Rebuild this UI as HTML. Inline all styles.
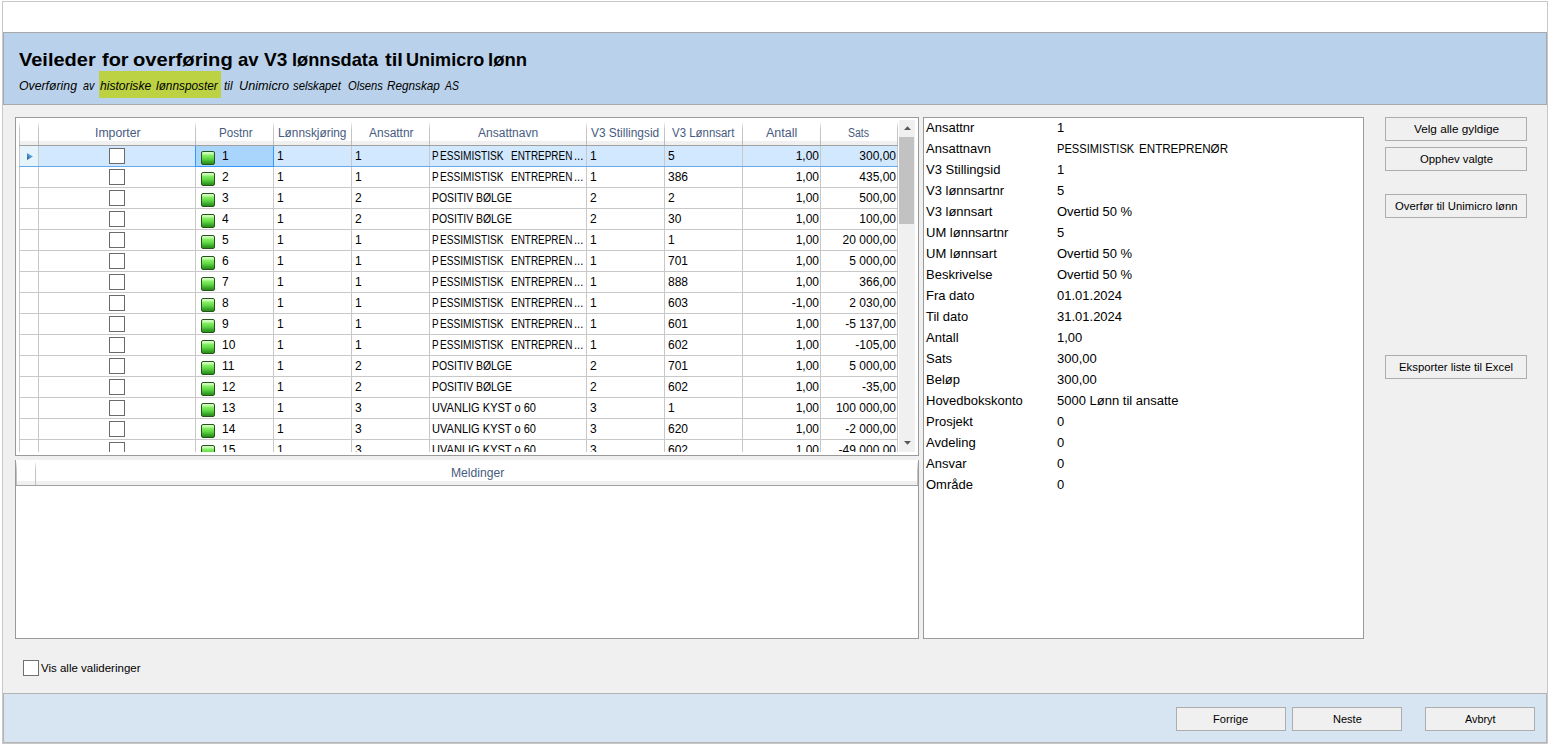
<!DOCTYPE html>
<html><head><meta charset="utf-8"><title>Veileder</title>
<style>
html,body{margin:0;padding:0;width:1548px;height:744px;overflow:hidden;background:#fff;}
body{position:relative;font-family:'Liberation Sans',sans-serif;}
.r{position:absolute;box-sizing:content-box;}
.t{position:absolute;white-space:pre;color:#000;font-family:'Liberation Sans',sans-serif;}
.g{position:absolute;width:12px;height:12px;border:1px solid #24561c;border-radius:2px;background:linear-gradient(#d4ffc4 0%,#c8fcb0 14%,#86f066 26%,#62d846 55%,#3aa82a 82%,#2a8a18 100%);}
.btn{position:absolute;border:1px solid #adadad;background:#f0f0f0;text-align:center;color:#000;white-space:pre;font-family:'Liberation Sans',sans-serif;}
</style></head><body>
<div class="r" style="left:0px;top:0px;width:1548px;height:744px;background:#ffffff;"></div>
<div class="r" style="left:2px;top:1px;width:1544px;height:741px;border:1px solid #c8c8c8;background:#f0f0f0;"></div>
<div class="r" style="left:3px;top:2px;width:1544px;height:30px;background:#ffffff;"></div>
<div class="r" style="left:3px;top:32px;width:1542px;height:71px;border:1px solid #a9a9a9;background:#b9d1ea;"></div>
<div class="t" style="left:19.20px;top:50px;font-size:19px;line-height:19px;font-weight:bold;transform:scaleX(1.0519);transform-origin:0 0;">Veileder</div>
<div class="t" style="left:102.00px;top:50px;font-size:19px;line-height:19px;font-weight:bold;transform:scaleX(1.0489);transform-origin:0 0;">for</div>
<div class="t" style="left:133.40px;top:50px;font-size:19px;line-height:19px;font-weight:bold;transform:scaleX(1.0616);transform-origin:0 0;">overføring</div>
<div class="t" style="left:237.50px;top:50px;font-size:19px;line-height:19px;font-weight:bold;transform:scaleX(0.9737);transform-origin:0 0;">av</div>
<div class="t" style="left:263.50px;top:50px;font-size:19px;line-height:19px;font-weight:bold;transform:scaleX(1.0012);transform-origin:0 0;">V3</div>
<div class="t" style="left:292.14px;top:50px;font-size:19px;line-height:19px;font-weight:bold;transform:scaleX(0.9589);transform-origin:0 0;">lønnsdata</div>
<div class="t" style="left:384.70px;top:50px;font-size:19px;line-height:19px;font-weight:bold;transform:scaleX(1.0637);transform-origin:0 0;">til</div>
<div class="t" style="left:406.45px;top:50px;font-size:19px;line-height:19px;font-weight:bold;transform:scaleX(0.9500);transform-origin:0 0;">Unimicro</div>
<div class="t" style="left:488.43px;top:50px;font-size:19px;line-height:19px;font-weight:bold;transform:scaleX(0.9743);transform-origin:0 0;">lønn</div>
<div class="r" style="left:99px;top:71px;width:122px;height:27px;background:#bdd243;"></div>
<div class="t" style="left:18.70px;top:79px;font-size:13px;line-height:13px;font-style:italic;transform:scaleX(0.9442);transform-origin:0 0;">Overføring</div>
<div class="t" style="left:83.40px;top:79px;font-size:13px;line-height:13px;font-style:italic;transform:scaleX(0.8273);transform-origin:0 0;">av</div>
<div class="t" style="left:100.00px;top:79px;font-size:13px;line-height:13px;font-style:italic;transform:scaleX(0.9327);transform-origin:0 0;">historiske</div>
<div class="t" style="left:156.20px;top:79px;font-size:13px;line-height:13px;font-style:italic;transform:scaleX(0.9097);transform-origin:0 0;">lønnsposter</div>
<div class="t" style="left:223.80px;top:79px;font-size:13px;line-height:13px;font-style:italic;transform:scaleX(0.9143);transform-origin:0 0;">til</div>
<div class="t" style="left:238.70px;top:79px;font-size:13px;line-height:13px;font-style:italic;transform:scaleX(0.9755);transform-origin:0 0;">Unimicro</div>
<div class="t" style="left:293.00px;top:79px;font-size:13px;line-height:13px;font-style:italic;transform:scaleX(0.8702);transform-origin:0 0;">selskapet</div>
<div class="t" style="left:347.50px;top:79px;font-size:13px;line-height:13px;font-style:italic;transform:scaleX(0.8618);transform-origin:0 0;">Olsens</div>
<div class="t" style="left:387.30px;top:79px;font-size:13px;line-height:13px;font-style:italic;transform:scaleX(0.9038);transform-origin:0 0;">Regnskap</div>
<div class="t" style="left:445.30px;top:79px;font-size:13px;line-height:13px;font-style:italic;transform:scaleX(0.7980);transform-origin:0 0;">AS</div>
<div class="r" style="left:3px;top:693px;width:1542px;height:48px;border:1px solid #b4b4b4;background:#d7e4f2;"></div>
<div class="r" style="left:15px;top:117px;width:902px;height:337px;border:1px solid #9a9a9a;background:#ffffff;"></div>
<div class="r" style="left:20px;top:141px;width:878px;height:4px;background:#f0f0f0;"></div>
<div class="r" style="left:19px;top:145px;width:879px;height:1px;background:#a0a0a0;"></div>
<div class="r" style="left:19px;top:122px;width:1px;height:23px;background:linear-gradient(#f4f4f4,#c8c8c8 30%,#bdbdbd)"></div>
<div class="r" style="left:38px;top:122px;width:1px;height:23px;background:linear-gradient(#f4f4f4,#c8c8c8 30%,#bdbdbd)"></div>
<div class="r" style="left:195px;top:122px;width:1px;height:23px;background:linear-gradient(#f4f4f4,#c8c8c8 30%,#bdbdbd)"></div>
<div class="r" style="left:273px;top:122px;width:1px;height:23px;background:linear-gradient(#f4f4f4,#c8c8c8 30%,#bdbdbd)"></div>
<div class="r" style="left:351px;top:122px;width:1px;height:23px;background:linear-gradient(#f4f4f4,#c8c8c8 30%,#bdbdbd)"></div>
<div class="r" style="left:429px;top:122px;width:1px;height:23px;background:linear-gradient(#f4f4f4,#c8c8c8 30%,#bdbdbd)"></div>
<div class="r" style="left:586px;top:122px;width:1px;height:23px;background:linear-gradient(#f4f4f4,#c8c8c8 30%,#bdbdbd)"></div>
<div class="r" style="left:664px;top:122px;width:1px;height:23px;background:linear-gradient(#f4f4f4,#c8c8c8 30%,#bdbdbd)"></div>
<div class="r" style="left:742px;top:122px;width:1px;height:23px;background:linear-gradient(#f4f4f4,#c8c8c8 30%,#bdbdbd)"></div>
<div class="r" style="left:820px;top:122px;width:1px;height:23px;background:linear-gradient(#f4f4f4,#c8c8c8 30%,#bdbdbd)"></div>
<div class="r" style="left:897px;top:122px;width:1px;height:23px;background:linear-gradient(#f4f4f4,#c8c8c8 30%,#bdbdbd)"></div>
<div class="t" style="left:94.78px;top:127px;font-size:12px;line-height:12px;color:#475b80;transform:scaleX(1.0210);transform-origin:0 0;">Importer</div>
<div class="t" style="left:218.70px;top:127px;font-size:12px;line-height:12px;color:#475b80;transform:scaleX(0.9658);transform-origin:0 0;">Postnr</div>
<div class="t" style="left:278.40px;top:127px;font-size:12px;line-height:12px;color:#475b80;transform:scaleX(0.9871);transform-origin:0 0;">Lønnskjøring</div>
<div class="t" style="left:368.50px;top:127px;font-size:12px;line-height:12px;color:#475b80;transform:scaleX(0.9979);transform-origin:0 0;">Ansattnr</div>
<div class="t" style="left:478.00px;top:127px;font-size:12px;line-height:12px;color:#475b80;transform:scaleX(1.0022);transform-origin:0 0;">Ansattnavn</div>
<div class="t" style="left:591.10px;top:127px;font-size:12px;line-height:12px;color:#475b80;transform:scaleX(0.9922);transform-origin:0 0;">V3 Stillingsid</div>
<div class="t" style="left:672.40px;top:127px;font-size:12px;line-height:12px;color:#475b80;transform:scaleX(0.9541);transform-origin:0 0;">V3 Lønnsart</div>
<div class="t" style="left:766.20px;top:127px;font-size:12px;line-height:12px;color:#475b80;transform:scaleX(1.0425);transform-origin:0 0;">Antall</div>
<div class="t" style="left:848.30px;top:127px;font-size:12px;line-height:12px;color:#475b80;transform:scaleX(0.8746);transform-origin:0 0;">Sats</div>
<div class="r" style="left:0;top:146px;width:898px;height:306px;overflow:hidden">
<div class="r" style="left:20px;top:0px;width:18px;height:20px;background:#e5f3fb;"></div>
<div class="r" style="left:39px;top:0px;width:858px;height:20px;background:#d1e8ff;"></div>
<div class="r" style="left:196px;top:0px;width:77px;height:20px;background:#a9d4fb;"></div>
<div class="r" style="left:19px;top:20px;width:879px;height:1px;background:#64aaf0;"></div>
<div class="r" style="left:109px;top:2px;width:14px;height:14px;border:1px solid #6a6a6a;background:#fff"></div>
<div class="g" style="left:201px;top:5px"></div>
<div class="t" style="left:222px;top:4px;font-size:12px;line-height:12px;">1</div>
<div class="t" style="left:277px;top:4px;font-size:12px;line-height:12px;">1</div>
<div class="t" style="left:355px;top:4px;font-size:12px;line-height:12px;">1</div>
<div class="t" style="left:432.00px;top:4px;font-size:12px;line-height:12px;transform:scaleX(0.8250);transform-origin:0 0;">P</div>
<div class="t" style="left:440.10px;top:4px;font-size:12px;line-height:12px;transform:scaleX(0.8428);transform-origin:0 0;">ESSIMISTISK</div>
<div class="t" style="left:511.00px;top:4px;font-size:12px;line-height:12px;transform:scaleX(0.8290);transform-origin:0 0;">ENTREPREN</div>
<div class="t" style="left:574.08px;top:4px;font-size:12px;line-height:12px;transform:scaleX(0.9229);transform-origin:0 0;">...</div>
<div class="t" style="left:590px;top:4px;font-size:12px;line-height:12px;">1</div>
<div class="t" style="left:668px;top:4px;font-size:12px;line-height:12px;">5</div>
<div class="t" style="right:79px;top:4px;font-size:12px;line-height:12px">1,00</div>
<div class="t" style="right:2px;top:4px;font-size:12px;line-height:12px">300,00</div>
<div class="r" style="left:19px;top:41px;width:879px;height:1px;background:#c8c8c8;"></div>
<div class="r" style="left:109px;top:23px;width:14px;height:14px;border:1px solid #6a6a6a;background:#fff"></div>
<div class="g" style="left:201px;top:26px"></div>
<div class="t" style="left:222px;top:25px;font-size:12px;line-height:12px;">2</div>
<div class="t" style="left:277px;top:25px;font-size:12px;line-height:12px;">1</div>
<div class="t" style="left:355px;top:25px;font-size:12px;line-height:12px;">1</div>
<div class="t" style="left:432.00px;top:25px;font-size:12px;line-height:12px;transform:scaleX(0.8250);transform-origin:0 0;">P</div>
<div class="t" style="left:440.10px;top:25px;font-size:12px;line-height:12px;transform:scaleX(0.8428);transform-origin:0 0;">ESSIMISTISK</div>
<div class="t" style="left:511.00px;top:25px;font-size:12px;line-height:12px;transform:scaleX(0.8290);transform-origin:0 0;">ENTREPREN</div>
<div class="t" style="left:574.08px;top:25px;font-size:12px;line-height:12px;transform:scaleX(0.9229);transform-origin:0 0;">...</div>
<div class="t" style="left:590px;top:25px;font-size:12px;line-height:12px;">1</div>
<div class="t" style="left:668px;top:25px;font-size:12px;line-height:12px;">386</div>
<div class="t" style="right:79px;top:25px;font-size:12px;line-height:12px">1,00</div>
<div class="t" style="right:2px;top:25px;font-size:12px;line-height:12px">435,00</div>
<div class="r" style="left:19px;top:62px;width:879px;height:1px;background:#c8c8c8;"></div>
<div class="r" style="left:109px;top:44px;width:14px;height:14px;border:1px solid #6a6a6a;background:#fff"></div>
<div class="g" style="left:201px;top:47px"></div>
<div class="t" style="left:222px;top:46px;font-size:12px;line-height:12px;">3</div>
<div class="t" style="left:277px;top:46px;font-size:12px;line-height:12px;">1</div>
<div class="t" style="left:355px;top:46px;font-size:12px;line-height:12px;">2</div>
<div class="t" style="left:431.70px;top:46px;font-size:12px;line-height:12px;transform:scaleX(0.8683);transform-origin:0 0;">POSITIV BØLGE</div>
<div class="t" style="left:590px;top:46px;font-size:12px;line-height:12px;">2</div>
<div class="t" style="left:668px;top:46px;font-size:12px;line-height:12px;">2</div>
<div class="t" style="right:79px;top:46px;font-size:12px;line-height:12px">1,00</div>
<div class="t" style="right:2px;top:46px;font-size:12px;line-height:12px">500,00</div>
<div class="r" style="left:19px;top:83px;width:879px;height:1px;background:#c8c8c8;"></div>
<div class="r" style="left:109px;top:65px;width:14px;height:14px;border:1px solid #6a6a6a;background:#fff"></div>
<div class="g" style="left:201px;top:68px"></div>
<div class="t" style="left:222px;top:67px;font-size:12px;line-height:12px;">4</div>
<div class="t" style="left:277px;top:67px;font-size:12px;line-height:12px;">1</div>
<div class="t" style="left:355px;top:67px;font-size:12px;line-height:12px;">2</div>
<div class="t" style="left:431.70px;top:67px;font-size:12px;line-height:12px;transform:scaleX(0.8683);transform-origin:0 0;">POSITIV BØLGE</div>
<div class="t" style="left:590px;top:67px;font-size:12px;line-height:12px;">2</div>
<div class="t" style="left:668px;top:67px;font-size:12px;line-height:12px;">30</div>
<div class="t" style="right:79px;top:67px;font-size:12px;line-height:12px">1,00</div>
<div class="t" style="right:2px;top:67px;font-size:12px;line-height:12px">100,00</div>
<div class="r" style="left:19px;top:104px;width:879px;height:1px;background:#c8c8c8;"></div>
<div class="r" style="left:109px;top:86px;width:14px;height:14px;border:1px solid #6a6a6a;background:#fff"></div>
<div class="g" style="left:201px;top:89px"></div>
<div class="t" style="left:222px;top:88px;font-size:12px;line-height:12px;">5</div>
<div class="t" style="left:277px;top:88px;font-size:12px;line-height:12px;">1</div>
<div class="t" style="left:355px;top:88px;font-size:12px;line-height:12px;">1</div>
<div class="t" style="left:432.00px;top:88px;font-size:12px;line-height:12px;transform:scaleX(0.8250);transform-origin:0 0;">P</div>
<div class="t" style="left:440.10px;top:88px;font-size:12px;line-height:12px;transform:scaleX(0.8428);transform-origin:0 0;">ESSIMISTISK</div>
<div class="t" style="left:511.00px;top:88px;font-size:12px;line-height:12px;transform:scaleX(0.8290);transform-origin:0 0;">ENTREPREN</div>
<div class="t" style="left:574.08px;top:88px;font-size:12px;line-height:12px;transform:scaleX(0.9229);transform-origin:0 0;">...</div>
<div class="t" style="left:590px;top:88px;font-size:12px;line-height:12px;">1</div>
<div class="t" style="left:668px;top:88px;font-size:12px;line-height:12px;">1</div>
<div class="t" style="right:79px;top:88px;font-size:12px;line-height:12px">1,00</div>
<div class="t" style="right:2px;top:88px;font-size:12px;line-height:12px">20 000,00</div>
<div class="r" style="left:19px;top:125px;width:879px;height:1px;background:#c8c8c8;"></div>
<div class="r" style="left:109px;top:107px;width:14px;height:14px;border:1px solid #6a6a6a;background:#fff"></div>
<div class="g" style="left:201px;top:110px"></div>
<div class="t" style="left:222px;top:109px;font-size:12px;line-height:12px;">6</div>
<div class="t" style="left:277px;top:109px;font-size:12px;line-height:12px;">1</div>
<div class="t" style="left:355px;top:109px;font-size:12px;line-height:12px;">1</div>
<div class="t" style="left:432.00px;top:109px;font-size:12px;line-height:12px;transform:scaleX(0.8250);transform-origin:0 0;">P</div>
<div class="t" style="left:440.10px;top:109px;font-size:12px;line-height:12px;transform:scaleX(0.8428);transform-origin:0 0;">ESSIMISTISK</div>
<div class="t" style="left:511.00px;top:109px;font-size:12px;line-height:12px;transform:scaleX(0.8290);transform-origin:0 0;">ENTREPREN</div>
<div class="t" style="left:574.08px;top:109px;font-size:12px;line-height:12px;transform:scaleX(0.9229);transform-origin:0 0;">...</div>
<div class="t" style="left:590px;top:109px;font-size:12px;line-height:12px;">1</div>
<div class="t" style="left:668px;top:109px;font-size:12px;line-height:12px;">701</div>
<div class="t" style="right:79px;top:109px;font-size:12px;line-height:12px">1,00</div>
<div class="t" style="right:2px;top:109px;font-size:12px;line-height:12px">5 000,00</div>
<div class="r" style="left:19px;top:146px;width:879px;height:1px;background:#c8c8c8;"></div>
<div class="r" style="left:109px;top:128px;width:14px;height:14px;border:1px solid #6a6a6a;background:#fff"></div>
<div class="g" style="left:201px;top:131px"></div>
<div class="t" style="left:222px;top:130px;font-size:12px;line-height:12px;">7</div>
<div class="t" style="left:277px;top:130px;font-size:12px;line-height:12px;">1</div>
<div class="t" style="left:355px;top:130px;font-size:12px;line-height:12px;">1</div>
<div class="t" style="left:432.00px;top:130px;font-size:12px;line-height:12px;transform:scaleX(0.8250);transform-origin:0 0;">P</div>
<div class="t" style="left:440.10px;top:130px;font-size:12px;line-height:12px;transform:scaleX(0.8428);transform-origin:0 0;">ESSIMISTISK</div>
<div class="t" style="left:511.00px;top:130px;font-size:12px;line-height:12px;transform:scaleX(0.8290);transform-origin:0 0;">ENTREPREN</div>
<div class="t" style="left:574.08px;top:130px;font-size:12px;line-height:12px;transform:scaleX(0.9229);transform-origin:0 0;">...</div>
<div class="t" style="left:590px;top:130px;font-size:12px;line-height:12px;">1</div>
<div class="t" style="left:668px;top:130px;font-size:12px;line-height:12px;">888</div>
<div class="t" style="right:79px;top:130px;font-size:12px;line-height:12px">1,00</div>
<div class="t" style="right:2px;top:130px;font-size:12px;line-height:12px">366,00</div>
<div class="r" style="left:19px;top:167px;width:879px;height:1px;background:#c8c8c8;"></div>
<div class="r" style="left:109px;top:149px;width:14px;height:14px;border:1px solid #6a6a6a;background:#fff"></div>
<div class="g" style="left:201px;top:152px"></div>
<div class="t" style="left:222px;top:151px;font-size:12px;line-height:12px;">8</div>
<div class="t" style="left:277px;top:151px;font-size:12px;line-height:12px;">1</div>
<div class="t" style="left:355px;top:151px;font-size:12px;line-height:12px;">1</div>
<div class="t" style="left:432.00px;top:151px;font-size:12px;line-height:12px;transform:scaleX(0.8250);transform-origin:0 0;">P</div>
<div class="t" style="left:440.10px;top:151px;font-size:12px;line-height:12px;transform:scaleX(0.8428);transform-origin:0 0;">ESSIMISTISK</div>
<div class="t" style="left:511.00px;top:151px;font-size:12px;line-height:12px;transform:scaleX(0.8290);transform-origin:0 0;">ENTREPREN</div>
<div class="t" style="left:574.08px;top:151px;font-size:12px;line-height:12px;transform:scaleX(0.9229);transform-origin:0 0;">...</div>
<div class="t" style="left:590px;top:151px;font-size:12px;line-height:12px;">1</div>
<div class="t" style="left:668px;top:151px;font-size:12px;line-height:12px;">603</div>
<div class="t" style="right:79px;top:151px;font-size:12px;line-height:12px">-1,00</div>
<div class="t" style="right:2px;top:151px;font-size:12px;line-height:12px">2 030,00</div>
<div class="r" style="left:19px;top:188px;width:879px;height:1px;background:#c8c8c8;"></div>
<div class="r" style="left:109px;top:170px;width:14px;height:14px;border:1px solid #6a6a6a;background:#fff"></div>
<div class="g" style="left:201px;top:173px"></div>
<div class="t" style="left:222px;top:172px;font-size:12px;line-height:12px;">9</div>
<div class="t" style="left:277px;top:172px;font-size:12px;line-height:12px;">1</div>
<div class="t" style="left:355px;top:172px;font-size:12px;line-height:12px;">1</div>
<div class="t" style="left:432.00px;top:172px;font-size:12px;line-height:12px;transform:scaleX(0.8250);transform-origin:0 0;">P</div>
<div class="t" style="left:440.10px;top:172px;font-size:12px;line-height:12px;transform:scaleX(0.8428);transform-origin:0 0;">ESSIMISTISK</div>
<div class="t" style="left:511.00px;top:172px;font-size:12px;line-height:12px;transform:scaleX(0.8290);transform-origin:0 0;">ENTREPREN</div>
<div class="t" style="left:574.08px;top:172px;font-size:12px;line-height:12px;transform:scaleX(0.9229);transform-origin:0 0;">...</div>
<div class="t" style="left:590px;top:172px;font-size:12px;line-height:12px;">1</div>
<div class="t" style="left:668px;top:172px;font-size:12px;line-height:12px;">601</div>
<div class="t" style="right:79px;top:172px;font-size:12px;line-height:12px">1,00</div>
<div class="t" style="right:2px;top:172px;font-size:12px;line-height:12px">-5 137,00</div>
<div class="r" style="left:19px;top:209px;width:879px;height:1px;background:#c8c8c8;"></div>
<div class="r" style="left:109px;top:191px;width:14px;height:14px;border:1px solid #6a6a6a;background:#fff"></div>
<div class="g" style="left:201px;top:194px"></div>
<div class="t" style="left:222px;top:193px;font-size:12px;line-height:12px;">10</div>
<div class="t" style="left:277px;top:193px;font-size:12px;line-height:12px;">1</div>
<div class="t" style="left:355px;top:193px;font-size:12px;line-height:12px;">1</div>
<div class="t" style="left:432.00px;top:193px;font-size:12px;line-height:12px;transform:scaleX(0.8250);transform-origin:0 0;">P</div>
<div class="t" style="left:440.10px;top:193px;font-size:12px;line-height:12px;transform:scaleX(0.8428);transform-origin:0 0;">ESSIMISTISK</div>
<div class="t" style="left:511.00px;top:193px;font-size:12px;line-height:12px;transform:scaleX(0.8290);transform-origin:0 0;">ENTREPREN</div>
<div class="t" style="left:574.08px;top:193px;font-size:12px;line-height:12px;transform:scaleX(0.9229);transform-origin:0 0;">...</div>
<div class="t" style="left:590px;top:193px;font-size:12px;line-height:12px;">1</div>
<div class="t" style="left:668px;top:193px;font-size:12px;line-height:12px;">602</div>
<div class="t" style="right:79px;top:193px;font-size:12px;line-height:12px">1,00</div>
<div class="t" style="right:2px;top:193px;font-size:12px;line-height:12px">-105,00</div>
<div class="r" style="left:19px;top:230px;width:879px;height:1px;background:#c8c8c8;"></div>
<div class="r" style="left:109px;top:212px;width:14px;height:14px;border:1px solid #6a6a6a;background:#fff"></div>
<div class="g" style="left:201px;top:215px"></div>
<div class="t" style="left:222px;top:214px;font-size:12px;line-height:12px;">11</div>
<div class="t" style="left:277px;top:214px;font-size:12px;line-height:12px;">1</div>
<div class="t" style="left:355px;top:214px;font-size:12px;line-height:12px;">2</div>
<div class="t" style="left:431.70px;top:214px;font-size:12px;line-height:12px;transform:scaleX(0.8683);transform-origin:0 0;">POSITIV BØLGE</div>
<div class="t" style="left:590px;top:214px;font-size:12px;line-height:12px;">2</div>
<div class="t" style="left:668px;top:214px;font-size:12px;line-height:12px;">701</div>
<div class="t" style="right:79px;top:214px;font-size:12px;line-height:12px">1,00</div>
<div class="t" style="right:2px;top:214px;font-size:12px;line-height:12px">5 000,00</div>
<div class="r" style="left:19px;top:251px;width:879px;height:1px;background:#c8c8c8;"></div>
<div class="r" style="left:109px;top:233px;width:14px;height:14px;border:1px solid #6a6a6a;background:#fff"></div>
<div class="g" style="left:201px;top:236px"></div>
<div class="t" style="left:222px;top:235px;font-size:12px;line-height:12px;">12</div>
<div class="t" style="left:277px;top:235px;font-size:12px;line-height:12px;">1</div>
<div class="t" style="left:355px;top:235px;font-size:12px;line-height:12px;">2</div>
<div class="t" style="left:431.70px;top:235px;font-size:12px;line-height:12px;transform:scaleX(0.8683);transform-origin:0 0;">POSITIV BØLGE</div>
<div class="t" style="left:590px;top:235px;font-size:12px;line-height:12px;">2</div>
<div class="t" style="left:668px;top:235px;font-size:12px;line-height:12px;">602</div>
<div class="t" style="right:79px;top:235px;font-size:12px;line-height:12px">1,00</div>
<div class="t" style="right:2px;top:235px;font-size:12px;line-height:12px">-35,00</div>
<div class="r" style="left:19px;top:272px;width:879px;height:1px;background:#c8c8c8;"></div>
<div class="r" style="left:109px;top:254px;width:14px;height:14px;border:1px solid #6a6a6a;background:#fff"></div>
<div class="g" style="left:201px;top:257px"></div>
<div class="t" style="left:222px;top:256px;font-size:12px;line-height:12px;">13</div>
<div class="t" style="left:277px;top:256px;font-size:12px;line-height:12px;">1</div>
<div class="t" style="left:355px;top:256px;font-size:12px;line-height:12px;">3</div>
<div class="t" style="left:431.70px;top:256px;font-size:12px;line-height:12px;transform:scaleX(0.9208);transform-origin:0 0;">UVANLIG KYST o 60</div>
<div class="t" style="left:590px;top:256px;font-size:12px;line-height:12px;">3</div>
<div class="t" style="left:668px;top:256px;font-size:12px;line-height:12px;">1</div>
<div class="t" style="right:79px;top:256px;font-size:12px;line-height:12px">1,00</div>
<div class="t" style="right:2px;top:256px;font-size:12px;line-height:12px">100 000,00</div>
<div class="r" style="left:19px;top:293px;width:879px;height:1px;background:#c8c8c8;"></div>
<div class="r" style="left:109px;top:275px;width:14px;height:14px;border:1px solid #6a6a6a;background:#fff"></div>
<div class="g" style="left:201px;top:278px"></div>
<div class="t" style="left:222px;top:277px;font-size:12px;line-height:12px;">14</div>
<div class="t" style="left:277px;top:277px;font-size:12px;line-height:12px;">1</div>
<div class="t" style="left:355px;top:277px;font-size:12px;line-height:12px;">3</div>
<div class="t" style="left:431.70px;top:277px;font-size:12px;line-height:12px;transform:scaleX(0.9208);transform-origin:0 0;">UVANLIG KYST o 60</div>
<div class="t" style="left:590px;top:277px;font-size:12px;line-height:12px;">3</div>
<div class="t" style="left:668px;top:277px;font-size:12px;line-height:12px;">620</div>
<div class="t" style="right:79px;top:277px;font-size:12px;line-height:12px">1,00</div>
<div class="t" style="right:2px;top:277px;font-size:12px;line-height:12px">-2 000,00</div>
<div class="r" style="left:19px;top:314px;width:879px;height:1px;background:#c8c8c8;"></div>
<div class="r" style="left:109px;top:296px;width:14px;height:14px;border:1px solid #6a6a6a;background:#fff"></div>
<div class="g" style="left:201px;top:299px"></div>
<div class="t" style="left:222px;top:298px;font-size:12px;line-height:12px;">15</div>
<div class="t" style="left:277px;top:298px;font-size:12px;line-height:12px;">1</div>
<div class="t" style="left:355px;top:298px;font-size:12px;line-height:12px;">3</div>
<div class="t" style="left:431.70px;top:298px;font-size:12px;line-height:12px;transform:scaleX(0.9208);transform-origin:0 0;">UVANLIG KYST o 60</div>
<div class="t" style="left:590px;top:298px;font-size:12px;line-height:12px;">3</div>
<div class="t" style="left:668px;top:298px;font-size:12px;line-height:12px;">602</div>
<div class="t" style="right:79px;top:298px;font-size:12px;line-height:12px">1,00</div>
<div class="t" style="right:2px;top:298px;font-size:12px;line-height:12px">-49 000,00</div>
<svg class="r" style="left:27px;top:7px" width="7" height="7"><defs><linearGradient id="ag" x1="0" y1="1" x2="1" y2="0"><stop offset="0" stop-color="#23507e"/><stop offset="0.5" stop-color="#4f9ad6"/><stop offset="1" stop-color="#7cc0ee"/></linearGradient></defs><path d="M0 0 L6 3.5 L0 7Z" fill="url(#ag)"/></svg>
<div class="r" style="left:19px;top:0px;width:1px;height:306px;background:#c8c8c8;"></div>
<div class="r" style="left:38px;top:0px;width:1px;height:306px;background:#c8c8c8;"></div>
<div class="r" style="left:195px;top:0px;width:1px;height:306px;background:#c8c8c8;"></div>
<div class="r" style="left:273px;top:0px;width:1px;height:306px;background:#c8c8c8;"></div>
<div class="r" style="left:351px;top:0px;width:1px;height:306px;background:#c8c8c8;"></div>
<div class="r" style="left:429px;top:0px;width:1px;height:306px;background:#c8c8c8;"></div>
<div class="r" style="left:586px;top:0px;width:1px;height:306px;background:#c8c8c8;"></div>
<div class="r" style="left:664px;top:0px;width:1px;height:306px;background:#c8c8c8;"></div>
<div class="r" style="left:742px;top:0px;width:1px;height:306px;background:#c8c8c8;"></div>
<div class="r" style="left:820px;top:0px;width:1px;height:306px;background:#c8c8c8;"></div>
<div class="r" style="left:897px;top:0px;width:1px;height:306px;background:#c8c8c8;"></div>
<div class="r" style="left:195px;top:0px;width:1px;height:20px;background:#3399ff;"></div>
<div class="r" style="left:273px;top:0px;width:1px;height:20px;background:#3399ff;"></div>
<div class="r" style="left:19px;top:20px;width:879px;height:1px;background:#64aaf0;"></div>
<div class="r" style="left:195px;top:20px;width:79px;height:1px;background:#3399ff;"></div>
</div>
<div class="r" style="left:899px;top:120px;width:16px;height:332px;background:#f0f0f0;"></div>
<div class="r" style="left:899px;top:137px;width:15px;height:87px;background:#c2c2c2;"></div>
<svg class="r" style="left:904px;top:126px" width="7" height="4"><path d="M0 4 L3.5 0.2 L7 4Z" fill="#585858"/></svg>
<svg class="r" style="left:904px;top:441px" width="7" height="4"><path d="M0 0 L3.5 3.8 L7 0Z" fill="#585858"/></svg>
<div class="r" style="left:15px;top:460px;width:902px;height:178px;border:1px solid #9a9a9a;border-top:none;background:#fff"></div>
<div class="r" style="left:16px;top:481px;width:902px;height:4px;background:#f0f0f0;"></div>
<div class="r" style="left:16px;top:485px;width:902px;height:1px;background:#a0a0a0;"></div>
<div class="r" style="left:16px;top:462px;width:1px;height:23px;background:linear-gradient(#f4f4f4,#c8c8c8 30%,#bdbdbd)"></div>
<div class="r" style="left:35px;top:462px;width:1px;height:23px;background:linear-gradient(#f4f4f4,#c8c8c8 30%,#bdbdbd)"></div>
<div class="r" style="left:917px;top:462px;width:1px;height:23px;background:linear-gradient(#f4f4f4,#c8c8c8 30%,#bdbdbd)"></div>
<div class="t" style="left:450.70px;top:467px;font-size:12px;line-height:12px;color:#475b80;transform:scaleX(1.0114);transform-origin:0 0;">Meldinger</div>
<div class="r" style="left:923px;top:117px;width:439px;height:520px;border:1px solid #9a9a9a;background:#ffffff;"></div>
<div class="t" style="left:926px;top:121px;font-size:13px;line-height:13px;">Ansattnr</div>
<div class="t" style="left:1057px;top:121px;font-size:13px;line-height:13px;">1</div>
<div class="t" style="left:926px;top:142px;font-size:13px;line-height:13px;">Ansattnavn</div>
<div class="t" style="left:1057.14px;top:142px;font-size:13px;line-height:13px;transform:scaleX(0.8557);transform-origin:0 0;">PESSIMISTISK</div>
<div class="t" style="left:1139.31px;top:142px;font-size:13px;line-height:13px;transform:scaleX(0.8933);transform-origin:0 0;">ENTREPRENØR</div>
<div class="t" style="left:926px;top:163px;font-size:13px;line-height:13px;">V3 Stillingsid</div>
<div class="t" style="left:1057px;top:163px;font-size:13px;line-height:13px;">1</div>
<div class="t" style="left:926px;top:184px;font-size:13px;line-height:13px;">V3 lønnsartnr</div>
<div class="t" style="left:1057px;top:184px;font-size:13px;line-height:13px;">5</div>
<div class="t" style="left:926px;top:205px;font-size:13px;line-height:13px;">V3 lønnsart</div>
<div class="t" style="left:1057px;top:205px;font-size:13px;line-height:13px;">Overtid 50 %</div>
<div class="t" style="left:926px;top:226px;font-size:13px;line-height:13px;">UM lønnsartnr</div>
<div class="t" style="left:1057px;top:226px;font-size:13px;line-height:13px;">5</div>
<div class="t" style="left:926px;top:247px;font-size:13px;line-height:13px;">UM lønnsart</div>
<div class="t" style="left:1057px;top:247px;font-size:13px;line-height:13px;">Overtid 50 %</div>
<div class="t" style="left:926px;top:268px;font-size:13px;line-height:13px;">Beskrivelse</div>
<div class="t" style="left:1057px;top:268px;font-size:13px;line-height:13px;">Overtid 50 %</div>
<div class="t" style="left:926px;top:289px;font-size:13px;line-height:13px;">Fra dato</div>
<div class="t" style="left:1057px;top:289px;font-size:13px;line-height:13px;">01.01.2024</div>
<div class="t" style="left:926px;top:310px;font-size:13px;line-height:13px;">Til dato</div>
<div class="t" style="left:1057px;top:310px;font-size:13px;line-height:13px;">31.01.2024</div>
<div class="t" style="left:926px;top:331px;font-size:13px;line-height:13px;">Antall</div>
<div class="t" style="left:1057px;top:331px;font-size:13px;line-height:13px;">1,00</div>
<div class="t" style="left:926px;top:352px;font-size:13px;line-height:13px;">Sats</div>
<div class="t" style="left:1057px;top:352px;font-size:13px;line-height:13px;">300,00</div>
<div class="t" style="left:926px;top:373px;font-size:13px;line-height:13px;">Beløp</div>
<div class="t" style="left:1057px;top:373px;font-size:13px;line-height:13px;">300,00</div>
<div class="t" style="left:926px;top:394px;font-size:13px;line-height:13px;">Hovedbokskonto</div>
<div class="t" style="left:1057px;top:394px;font-size:13px;line-height:13px;">5000 Lønn til ansatte</div>
<div class="t" style="left:926px;top:415px;font-size:13px;line-height:13px;">Prosjekt</div>
<div class="t" style="left:1057px;top:415px;font-size:13px;line-height:13px;">0</div>
<div class="t" style="left:926px;top:436px;font-size:13px;line-height:13px;">Avdeling</div>
<div class="t" style="left:1057px;top:436px;font-size:13px;line-height:13px;">0</div>
<div class="t" style="left:926px;top:457px;font-size:13px;line-height:13px;">Ansvar</div>
<div class="t" style="left:1057px;top:457px;font-size:13px;line-height:13px;">0</div>
<div class="t" style="left:926px;top:478px;font-size:13px;line-height:13px;">Område</div>
<div class="t" style="left:1057px;top:478px;font-size:13px;line-height:13px;">0</div>
<div class="btn" style="left:1385px;top:117px;width:140px;height:22px"></div>
<div class="t" style="left:1414.00px;top:124px;font-size:11.5px;line-height:11.5px;transform:scaleX(1.0239);transform-origin:0 0;">Velg alle gyldige</div>
<div class="btn" style="left:1385px;top:147px;width:140px;height:22px"></div>
<div class="t" style="left:1420.20px;top:154px;font-size:11.5px;line-height:11.5px;transform:scaleX(0.9842);transform-origin:0 0;">Opphev valgte</div>
<div class="btn" style="left:1385px;top:194px;width:140px;height:22px"></div>
<div class="t" style="left:1395.00px;top:201px;font-size:11.5px;line-height:11.5px;transform:scaleX(0.9831);transform-origin:0 0;">Overfør til Unimicro lønn</div>
<div class="btn" style="left:1385px;top:355px;width:140px;height:22px"></div>
<div class="t" style="left:1399.10px;top:362px;font-size:11.5px;line-height:11.5px;transform:scaleX(0.9851);transform-origin:0 0;">Eksporter liste til Excel</div>
<div class="btn" style="left:1176px;top:707px;width:108px;height:22px"></div>
<div class="t" style="left:1213.40px;top:714px;font-size:11.5px;line-height:11.5px;transform:scaleX(0.9659);transform-origin:0 0;">Forrige</div>
<div class="btn" style="left:1292px;top:707px;width:108px;height:22px"></div>
<div class="t" style="left:1333.40px;top:714px;font-size:11.5px;line-height:11.5px;transform:scaleX(0.9580);transform-origin:0 0;">Neste</div>
<div class="btn" style="left:1425px;top:707px;width:108px;height:22px"></div>
<div class="t" style="left:1465.30px;top:714px;font-size:11.5px;line-height:11.5px;transform:scaleX(0.9431);transform-origin:0 0;">Avbryt</div>
<div class="r" style="left:23px;top:660px;width:14px;height:14px;border:1px solid #707070;background:#fff"></div>
<div class="t" style="left:41px;top:663px;font-size:11.5px;line-height:11.5px;">Vis alle valideringer</div>
</body></html>
